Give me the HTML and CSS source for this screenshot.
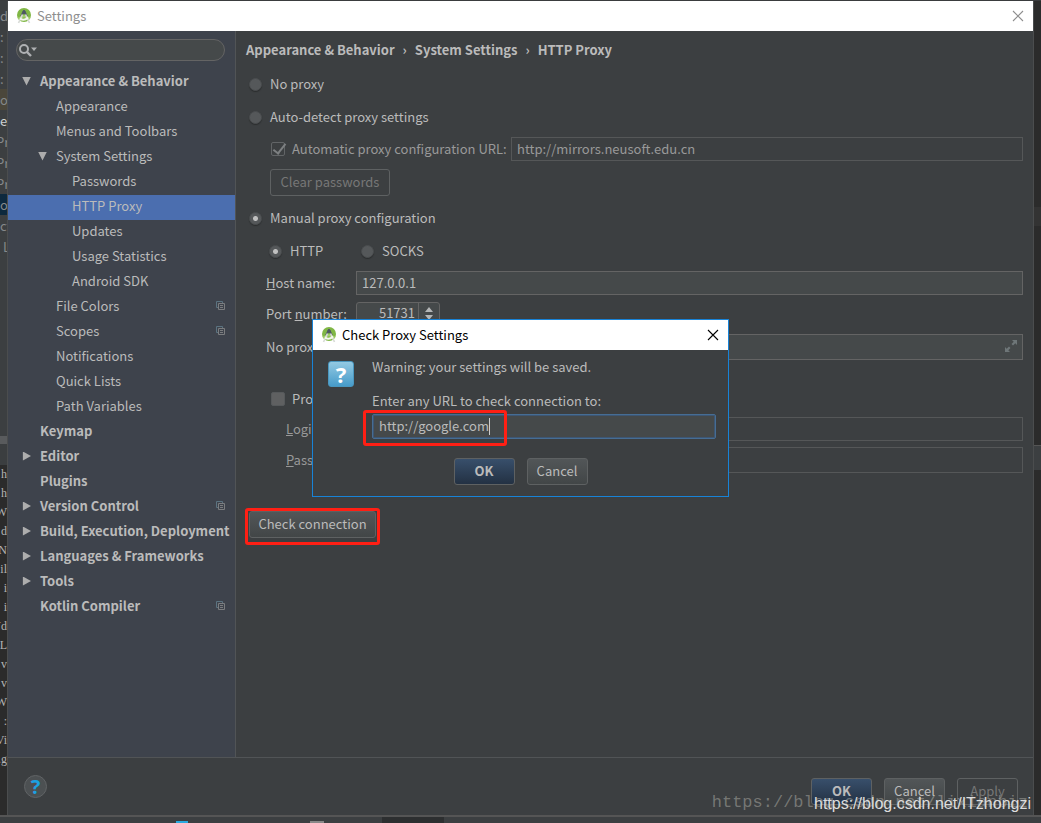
FILE: index.html
```html
<!DOCTYPE html>
<html lang="en">
<head>
<meta charset="utf-8">
<title>Settings</title>
<link rel="stylesheet" href="styles.css">
</head>
<body>
<svg class="defs" aria-hidden="true">
  <symbol id="studio" viewBox="0 0 16 16">
    <circle cx="8" cy="7" r="7" fill="#80b745"/>
    <path d="M1.6 9.800A7 7 0 0 0 4 12.600L8 9 12 12.600A7 7 0 0 0 14.400 9.800L8 7z" fill="#a5d06f"/>
    <path d="M8 2.500L5 8.500M8 2.500L11 8.500" stroke="#556068" stroke-width="1.800" fill="none"/>
    <circle cx="8" cy="4.500" r="1.800" fill="#4d5961"/>
    <path d="M6.500 6.500L2.500 15M9.500 6.500L13.500 15" stroke="#d9dcd8" stroke-width="1.700" fill="none"/>
    <path d="M4 10.500Q8 13.500 12 9.500" stroke="#f4f7ef" stroke-width="2" fill="none"/>
  </symbol>
  <symbol id="close" viewBox="0 0 12 12"><path d="M1 1L11 11M11 1L1 11" stroke="currentColor" stroke-width="1.100"/></symbol>
  <symbol id="copy" viewBox="0 0 10 10">
    <path d="M2 6.500H.5V.5H6.500V2" fill="none" stroke="#5b7380"/>
    <path d="M2.500 2.500H8.500V8.500H2.500z" fill="none" stroke="#7b7d7f"/>
    <path d="M4 4.500H7M4 6.500H7" stroke="#7b7d7f"/>
  </symbol>
</svg>
<div class="screen">
  <div class="desk">
    <aside class="ide-left">
      <div class="project">
        <span>d</span><span>:</span><span>:</span><span>:</span><span class="warm">ol</span><span class="lit">e</span><span class="cut">Pr</span><span class="cut">Pr</span><span class="cut">Pr</span><span class="picked">oj</span><span>ct</span><span>&nbsp;L</span>
      </div>
      <div class="split"></div>
      <div class="tool-head"></div>
      <div class="console">
        <span>h</span><span>h</span><span>W</span><span>d</span><span>gN</span><span>il</span><span>i</span><span>i</span><span>Vd</span><span>L</span><span>v</span><span>v</span><span>W</span><span>:</span><span>Vi</span><span>.g</span>
      </div>
    </aside>

    <section class="window">
      <header class="titlebar">
        <svg class="app-icon"><use href="#studio"/></svg>
        <h1 class="title">Settings</h1>
        <button class="close" aria-label="Close"><svg class="x"><use href="#close"/></svg></button>
      </header>

      <div class="content">
        <nav class="sidebar">
          <label class="search">
            <svg class="lens" viewBox="0 0 20 14"><circle cx="5" cy="6" r="4" fill="none" stroke="#afb1b3" stroke-width="2"/><path d="M8 9L12 13" stroke="#afb1b3" stroke-width="2.400"/><path d="M12 4.500H18L15 8z" fill="#afb1b3"/></svg>
            <input type="search" class="search-input" aria-label="Search settings">
          </label>
          <ul class="tree">
            <li class="item bold open">Appearance &amp; Behavior</li>
            <li class="item l2">Appearance</li>
            <li class="item l2">Menus and Toolbars</li>
            <li class="item l2 open">System Settings</li>
            <li class="item l3">Passwords</li>
            <li class="item l3 selected">HTTP Proxy</li>
            <li class="item l3">Updates</li>
            <li class="item l3">Usage Statistics</li>
            <li class="item l3">Android SDK</li>
            <li class="item l2">File Colors<svg class="copy"><use href="#copy"/></svg></li>
            <li class="item l2">Scopes<svg class="copy"><use href="#copy"/></svg></li>
            <li class="item l2">Notifications</li>
            <li class="item l2">Quick Lists</li>
            <li class="item l2">Path Variables</li>
            <li class="item bold">Keymap</li>
            <li class="item bold shut">Editor</li>
            <li class="item bold">Plugins</li>
            <li class="item bold shut">Version Control<svg class="copy"><use href="#copy"/></svg></li>
            <li class="item bold shut">Build, Execution, Deployment</li>
            <li class="item bold shut">Languages &amp; Frameworks</li>
            <li class="item bold shut">Tools</li>
            <li class="item bold">Kotlin Compiler<svg class="copy"><use href="#copy"/></svg></li>
          </ul>
        </nav>

        <main class="panel">
          <h2 class="crumbs"><span>Appearance &amp; Behavior</span><span>›</span><span>System Settings</span><span>›</span><span>HTTP Proxy</span></h2>
          <label class="row mode first"><input type="radio" name="mode" class="radio">No proxy</label>
          <label class="row mode"><input type="radio" name="mode" class="radio">Auto-detect proxy settings</label>
          <div class="row field inner dim">
            <label class="check-label auto"><input type="checkbox" class="check off" checked disabled>Automatic proxy configuration URL:</label>
            <input type="text" class="text off" value="http://mirrors.neusoft.edu.cn" disabled aria-label="Automatic proxy configuration URL">
          </div>
          <div class="row inner clear"><button class="btn ghost wide" disabled>Clear passwords</button></div>
          <label class="row mode manual"><input type="radio" name="mode" class="radio" checked>Manual proxy configuration</label>
          <div class="row mode kinds">
            <label class="kind"><input type="radio" name="kind" class="radio" checked>HTTP</label>
            <label class="kind"><input type="radio" name="kind" class="radio">SOCKS</label>
          </div>
          <div class="row field host">
            <label class="name" for="host"><u>H</u>ost name:</label>
            <input type="text" id="host" class="text" value="127.0.0.1">
          </div>
          <div class="row field port">
            <label class="name" for="port">Port <u>n</u>umber:</label>
            <span class="spinner"><input type="text" id="port" class="spin-input" value="51731"><svg class="arrows" viewBox="0 0 20 22"><path d="M6 9L10 4 14 9zM6 12H14L10 17z" fill="#b4b6b7"/></svg></span>
          </div>
          <div class="row field bypass">
            <label class="name" for="bypass">No proxy for:</label>
            <span class="text expander"><input type="text" id="bypass" class="bare"><svg class="expand" viewBox="0 0 12 12"><path d="M7 0H12V5L10.300 3.300 8 5.500 6.500 4 8.700 1.700zM0 7L1.700 8.700 4 6.500 5.500 8 3.300 10.300 5 12H0z" fill="#6e7678"/></svg></span>
          </div>
          <label class="row mode inner auth"><input type="checkbox" class="check">Proxy authentication</label>
          <div class="row field login dim">
            <label class="name" for="login"><u>L</u>ogin:</label>
            <input type="text" id="login" class="text off" disabled>
          </div>
          <div class="row field pass dim">
            <label class="name" for="pass"><u>P</u>assword:</label>
            <input type="password" id="pass" class="text off" disabled>
          </div>
          <div class="row test"><span class="marked"><button class="btn plain check-btn">Check connection</button><i class="mark"></i></span></div>
        </main>
      </div>

      <footer class="footer">
        <button class="help" aria-label="Help">?</button>
        <div class="actions">
          <button class="btn primary">OK</button>
          <button class="btn plain">Cancel</button>
          <button class="btn ghost" disabled>Apply</button>
        </div>
      </footer>
    </section>

    <aside class="ide-right"><div class="tab-edge"></div><div class="tool-edge"></div></aside>
  </div>
  <div class="status"><i class="blip blue"></i><i class="blip grey"></i><i class="task"></i></div>

  <section class="dialog" role="dialog" aria-label="Check Proxy Settings">
    <header class="titlebar dark">
      <svg class="app-icon"><use href="#studio"/></svg>
      <h2 class="title">Check Proxy Settings</h2>
      <button class="close" aria-label="Close"><svg class="x"><use href="#close"/></svg></button>
    </header>
    <div class="ask">
      <div class="question">?</div>
      <div class="ask-body">
        <p class="warning">Warning: your settings will be saved.</p>
        <label class="prompt" for="url">Enter any URL to check connection to:</label>
        <div class="marked url-box"><input type="text" id="url" class="text focus" value="http://google.com"><i class="caret"></i><i class="mark"></i></div>
      </div>
    </div>
    <div class="dialog-actions">
      <button class="btn primary">OK</button>
      <button class="btn plain">Cancel</button>
    </div>
  </section>

  <div class="stamp serif">https://blog.csdn.net/lixianbiz</div>
  <div class="stamp sans">https://blog.csdn.net/ITzhongzi</div>
</div>
</body>
</html>
```
FILE: styles.css
```css
* { box-sizing: border-box; }
body {
  margin: 0;
  background: #2b2b2b;
  color: #bbbbbb;
  font: 13px/20px "Noto Sans CJK SC", "Noto Sans", sans-serif;
}
input, button { font: inherit; color: inherit; margin: 0; }
h1, h2, p, ul { margin: 0; padding: 0; font-size: inherit; font-weight: normal; }
.defs { position: absolute; width: 0; height: 0; }
.screen { position: relative; min-height: 100vh; display: flex; flex-direction: column; overflow: hidden; }
.desk { flex: 1; display: flex; padding-top: 1px; background: #3a3c3e; }

/* IDE behind the window */
.ide-left { width: 8px; overflow: hidden; background: #2b2b2b; border-right: 1px solid #4b4d4e; display: flex; flex-direction: column; }
.project { height: 435px; padding-top: 4px; background: #3c3f41; color: #85888a; flex: none; }
.project span, .console span { display: block; white-space: nowrap; line-height: 21px; height: 21px; }
.project .warm { background: #4b473b; }
.project .lit { color: #d0d2d3; }
.project .picked { background: #0d293e; }
.project .cut { text-indent: -4px; }
.split { height: 8px; background: #595b5d; flex: none; }
.tool-head { height: 21px; background: #3b3e40; flex: none; }
.console { font-family: "Liberation Serif", serif; font-size: 12px; color: #b4b4b4; }
.console span { display: flex; justify-content: flex-end; line-height: 19px; height: 19px; }
.ide-right { width: 8px; background: #2b2b2b; border-left: 1px solid #4b4d4e; }
.tab-edge { margin-top: 206px; height: 19px; background: #333333; }
.tool-edge { margin-top: 219px; height: 25px; background: #3c3f41; border-top: 1px solid #555555; }
.status { height: 8px; background: #3c3f41; border-top: 2px solid #555555; display: flex; align-items: flex-end; padding-left: 176px; }
.blip { height: 2px; width: 14px; background: #888888; }
.blip.blue { width: 12px; margin-right: 122px; background: #29a9e0; }
.task { width: 62px; height: 6px; margin-left: 58px; background: #2d2f30; }

/* Settings window */
.window { flex: 1; min-width: 0; display: flex; flex-direction: column; background: #3c3f41; }
.titlebar { height: 30px; flex: none; display: flex; align-items: center; background: #ffffff; color: #8e8e8e; padding-left: 8px; }
.titlebar.dark { color: #000000; }
.app-icon { width: 16px; height: 16px; }
.title { flex: 1; margin-left: 5px; }
.close { width: 30px; height: 28px; padding: 0; border: 0; background: none; display: grid; place-items: center; }
.x { width: 12px; height: 12px; }
.content { flex: 1; display: flex; }
.sidebar { width: 228px; flex: none; background: #3e434c; border-right: 1px solid #515456; padding-top: 8px; }
.search { display: flex; align-items: center; height: 22px; margin: 0 10px 9px 8px; padding-left: 2px; background: #45494a; border: 1px solid #646464; border-radius: 11px; }
.lens { width: 20px; height: 14px; flex: none; }
.search-input { flex: 1; min-width: 0; border: 0; background: none; outline: 0; }
.tree { list-style: none; }
.item { height: 25px; line-height: 20px; padding: 0 9px 3px 32px; display: flex; align-items: center; white-space: nowrap; }
.item.l2 { padding-left: 48px; }
.item.l3 { padding-left: 64px; }
.item.selected { background: #4b6eaf; }
.bold { font-weight: bold; }
.item.open::before, .item.shut::before { content: ""; flex: none; width: 9px; height: 9px; margin-left: -18px; margin-right: 9px; background: #adadad; clip-path: polygon(0 0, 100% 0, 50% 100%); }
.item.shut::before { clip-path: polygon(10% 0, 100% 50%, 10% 100%); }
.copy { width: 10px; height: 10px; margin-left: auto; flex: none; }

/* Proxy form */
.panel { flex: 1; min-width: 0; padding: 9px 10px 0 10px; }
.crumbs { font-weight: bold; display: flex; gap: 8px; white-space: nowrap; }
.row { display: flex; align-items: center; white-space: nowrap; }
.mode { height: 20px; margin-top: 13px; }
.mode.first { margin-top: 14px; }
.radio { appearance: none; width: 13px; height: 13px; flex: none; margin: 0 8px 0 3px; border-radius: 50%; background: #55585a; border: 1px solid #4a4d4f; box-shadow: 0 1px 1px #2b2d2e; }
.radio:checked { background: radial-gradient(circle, #c0c0c0 0 2px, #55585a 3px); }
.inner { padding-left: 24px; }
.field { margin-top: 10px; height: 24px; }
.dim { color: #999999; }
.check-label { display: flex; align-items: center; flex: none; }
.auto { width: 241px; }
.check { appearance: none; width: 14px; height: 14px; flex: none; margin: 0 7px 0 1px; background: #5f6061; border: 1px solid #56595b; border-radius: 2px; }
.check.off { background: none; border-color: #626567; position: relative; }
.check.off:checked::after { content: ""; position: absolute; left: 4px; top: -2px; width: 5px; height: 11px; border: solid #7d8082; border-width: 0 2px 2px 0; transform: rotate(38deg); }
.text { flex: 1; min-width: 0; height: 24px; padding: 0 5px 2px; background: #45494a; border: 1px solid #646464; outline: 0; }
.text.off { background: none; border-color: #555758; color: #999999; }
.clear { margin-top: 8px; }
.btn { height: 27px; width: 61px; padding: 0 0 2px; border: 1px solid #5e6162; border-radius: 3px; white-space: nowrap; }
.plain { background: linear-gradient(#525658, #424647); }
.primary { background: linear-gradient(#384f6b, #233143); font-weight: bold; }
.ghost { background: none; color: #777777; }
.wide { width: 120px; }
.manual { margin-top: 12px; }
.kinds { padding-left: 20px; }
.kind { display: flex; align-items: center; width: 92px; }
.host, .port, .bypass { padding-left: 20px; }
.name { width: 90px; flex: none; }
.port { margin-top: 7px; }
.spinner { display: flex; width: 84px; height: 24px; background: #45494a; border: 1px solid #646464; border-radius: 3px; }
.spin-input { width: 62px; padding: 0 3px 2px 0; text-align: right; background: none; border: 0; border-right: 1px solid #646464; outline: 0; }
.arrows { width: 20px; height: 22px; }
.bypass { height: 26px; margin-top: 8px; }
.expander { height: 26px; display: flex; align-items: center; }
.bare { flex: 1; min-width: 0; border: 0; background: none; outline: 0; }
.expand { width: 12px; height: 12px; }
.auth { margin-top: 29px; }
.login, .pass { padding-left: 40px; }
.login .name, .pass .name { width: 80px; }
.login { margin-top: 8px; }
.pass { height: 26px; margin-top: 6px; }
.pass .text { height: 26px; }
.test { margin-top: 38px; padding-left: 3px; }
.marked { position: relative; display: flex; }
.check-btn { width: 127px; }
.mark { position: absolute; inset: -3px -4px -7px -4px; border: 3px solid #ff1f14; border-radius: 3px; pointer-events: none; }

.footer { height: 58px; flex: none; border-top: 1px solid #515456; display: flex; justify-content: space-between; align-items: flex-start; padding: 17px 15px 0 16px; }
.help { width: 23px; height: 23px; padding: 0; border: 1px solid #606365; border-radius: 50%; background: #4c5052; color: #1ba1e2; font: bold 20px/20px "Noto Sans", sans-serif; }
.actions { display: flex; gap: 12px; padding-top: 3px; }

/* Check Proxy Settings dialog */
.dialog { position: absolute; top: 319px; left: calc((100% - 417px) / 2); width: 417px; background: #3c3f41; border: 1px solid #1883d7; padding-bottom: 11px; }
.ask { display: flex; padding: 7px 12px 0 15px; }
.question { width: 26px; height: 26px; margin: 4px 18px 0 0; flex: none; border-radius: 3px; border: 1px solid #4a97bf; background: linear-gradient(#93c9e2, #479cca); color: #ffffff; font: bold 22px/24px "Noto Sans", sans-serif; text-align: center; }
.ask-body { flex: 1; min-width: 0; }
.warning { margin-bottom: 14px; }
.prompt { display: block; margin-bottom: 3px; }
.focus { height: 25px; border-color: #466d94; box-shadow: inset 0 0 0 1px #3d5673; border-radius: 2px; padding: 0 6px 2px; }
.caret { position: absolute; left: 117px; top: 4px; width: 1px; height: 17px; background: #cccccc; }
.url-box .mark { inset: -4px auto -7px -9px; width: 144px; }
.dialog-actions { display: flex; justify-content: center; gap: 12px; margin-top: 19px; }

.stamp { position: absolute; white-space: nowrap; }
.stamp.serif { right: 13px; bottom: 8px; font: 17px/24px "Liberation Mono", monospace; color: rgba(190, 190, 180, .45); }
.stamp.sans { right: 10px; bottom: 9px; font: 16px/20px "Liberation Sans", sans-serif; color: #dddddd; }
```
